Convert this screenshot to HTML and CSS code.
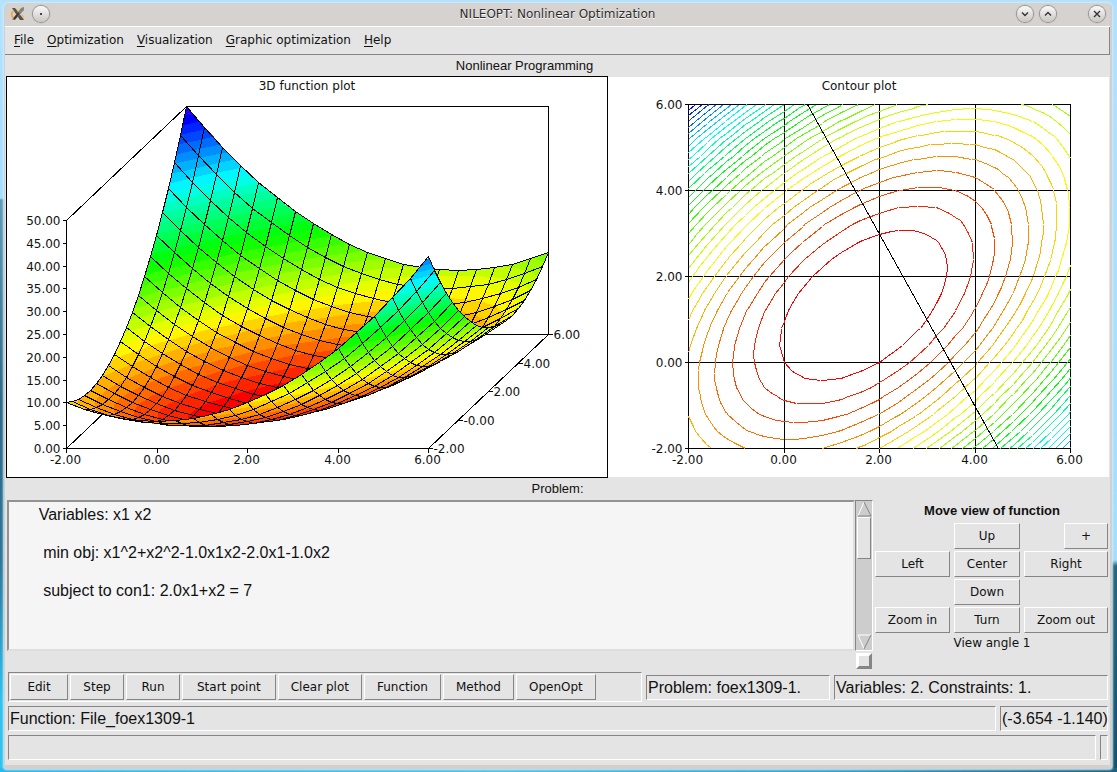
FILE: index.html
```
<!DOCTYPE html>
<html lang="en">
  <head>
    <meta charset="UTF-8" />
    <meta name="viewport" content="width=device-width, initial-scale=1.0" />
    <title>NILEOPT: Nonlinear Optimization</title>
    <link rel="stylesheet" href="styles.css">
  </head>
  <body>
    <div class="window">
      <header class="titlebar">
        <div class="titlebar-side">
          <svg class="app-icon" viewBox="0 0 16 16" width="16" height="16">
            <path d="M3 5 Q0 9 4 13" fill="none" stroke="#f7a84a" stroke-width="2" />
            <path d="M12 9 L13 13" stroke="#f7b35a" stroke-width="2" />
            <path d="M6 3 L8 6" stroke="#f4c23c" stroke-width="2" />
            <path d="M2 2 L5 2 L14 14 L10 14 Z" fill="#55524d" />
            <path d="M11 2 L14 1 L14 4 L5 14 L2 14 Z" fill="#86847e" />
            <path d="M9 7 L4 13" stroke="#3b3935" stroke-width="2" />
          </svg>
          <button class="wm-button" aria-label="Sticky">
            <svg viewBox="0 0 16 16" width="16" height="16"><rect x="7" y="7" width="2" height="2" fill="#444" /></svg>
          </button>
        </div>
        <span class="title">NILEOPT: Nonlinear Optimization</span>
        <div class="titlebar-side right">
          <button class="wm-button" aria-label="Minimize">
            <svg viewBox="0 0 16 16" width="16" height="16"><path d="M5 6.5 L8 9.5 L11 6.5" /></svg>
          </button>
          <button class="wm-button" aria-label="Maximize">
            <svg viewBox="0 0 16 16" width="16" height="16"><path d="M5 9.5 L8 6.5 L11 9.5" /></svg>
          </button>
          <button class="wm-button close" aria-label="Close">
            <svg viewBox="0 0 16 16" width="16" height="16"><path d="M5 5 L11 11 M11 5 L5 11" /></svg>
          </button>
        </div>
      </header>

      <nav class="menubar">
        <a href="#"><u>F</u>ile</a>
        <a href="#"><u>O</u>ptimization</a>
        <a href="#"><u>V</u>isualization</a>
        <a href="#"><u>G</u>raphic optimization</a>
        <a href="#"><u>H</u>elp</a>
      </nav>

      <main>
        <h1 class="caption">Nonlinear Programming</h1>
        <div class="plots">
          <svg class="plot surface" id="surface" viewBox="0 0 600 400"></svg>
          <svg class="plot" id="contour" viewBox="0 0 501 400"></svg>
        </div>

        <label class="caption problem-caption" for="problem">Problem:</label>
        <div class="middle">
          <textarea class="problem" id="problem" spellcheck="false">      Variables: x1 x2

       min obj: x1^2+x2^2-1.0x1x2-2.0x1-1.0x2

       subject to con1: 2.0x1+x2 = 7</textarea>
          <div class="scroll">
            <div class="scrollbar">
              <svg viewBox="0 0 15 16" width="15" height="16">
                <path d="M7 1 L1 15" stroke="#fff" />
                <path d="M7 1 L14 15 L1 15" stroke="#858585" />
              </svg>
              <div class="thumb"></div>
              <div class="trough"></div>
              <svg viewBox="0 0 15 16" width="15" height="16">
                <path d="M14 1 L1 1 L7 15" stroke="#fff" />
                <path d="M14 1 L7 15" stroke="#858585" />
              </svg>
            </div>
            <div class="sash"></div>
          </div>
          <section class="view">
            <h2>Move view of function</h2>
            <div class="view-buttons">
              <button class="up">Up</button>
              <button class="plus">+</button>
              <button class="left">Left</button>
              <button>Center</button>
              <button>Right</button>
              <button class="down">Down</button>
              <button class="left">Zoom in</button>
              <button>Turn</button>
              <button>Zoom out</button>
            </div>
            <p>View angle 1</p>
          </section>
        </div>

        <div class="row tools">
          <div class="toolbar">
            <button class="roomy">Edit</button>
            <button>Step</button>
            <button>Run</button>
            <button class="roomy">Start point</button>
            <button>Clear plot</button>
            <button>Function</button>
            <button>Method</button>
            <button>OpenOpt</button>
          </div>
          <div class="status name">Problem: foex1309-1.</div>
          <div class="status size">Variables: 2. Constraints: 1.</div>
        </div>
        <div class="row">
          <div class="status wide">Function: File_foex1309-1</div>
          <div class="status coords">(-3.654 -1.140)</div>
        </div>
        <div class="row">
          <div class="status wide"></div>
          <div class="status end"></div>
        </div>
      </main>
    </div>
    <script src="plots.js"></script>
  </body>
</html>
```
FILE: styles.css
```
/* Desktop behind the window */
body {
  margin: 0;
  padding: 3px 5px 6px 4px;
  font-family: "DejaVu Sans", sans-serif;
  font-size: 12px;
  color: #111;
  background:
    linear-gradient(90deg, #2cb8ea, #4fc0ec 45%, #2f9fd0 75%, #1d5f80) bottom / 100% 7px no-repeat,
    linear-gradient(#b4dffc, #a5dcff 560px, #2b6480 566px, #17506c) right / 8px 100% no-repeat,
    linear-gradient(#b4e2ff, #a5dcff 198px, #5f9ab5 200px, #2f6683 400px, #2f7396 560px, #2fc0ee 700px) left / 8px 100% no-repeat,
    #b4dffc;
}
.window {
  border: 1px solid #d3cfcc;
  border-width: 0 2px 4px 1px;
  border-radius: 5px 5px 3px 3px;
  background: #e4e4e4;
  box-shadow: 0 0 2px 1px #c9efff;
}

button {
  font: inherit;
  color: inherit;
  margin: 0;
  padding: 0 12px;
  height: 26px;
  background: #e4e4e4;
  border: 1px solid;
  border-color: #fff #858585 #858585 #fff;
}

/* Title bar */
.titlebar {
  display: flex;
  align-items: center;
  box-sizing: border-box;
  height: 24px;
  padding: 0 5px 2px;
  background: #d6d2cf;
  border-bottom: 1px solid #fff;
  border-radius: 4px 4px 0 0;
}
.titlebar-side {
  display: flex;
  flex: 1;
  align-items: center;
  gap: 7px;
}
.titlebar-side.right {
  justify-content: flex-end;
}
.title {
  color: #2c2c2c;
  text-shadow: 0 1px #fff;
}
.wm-button {
  display: flex;
  width: 16px;
  height: 16px;
  padding: 0;
  border: none;
  border-radius: 50%;
  background: linear-gradient(#fafafa, #c9c6c3);
  box-shadow: 0 0 1px 1px #8f8c89;
}
.wm-button.close {
  margin-left: 26px;
}
.wm-button path {
  fill: none;
  stroke: #333;
  stroke-width: 1.4;
}

/* Menu */
.menubar {
  display: flex;
  gap: 13px;
  height: 27px;
  line-height: 26px;
  padding-left: 9px;
  border-right: 1px solid #858585;
  border-bottom: 1px solid #858585;
}
.menubar a {
  color: inherit;
  text-decoration: none;
}
.menubar u {
  text-underline-offset: 2px;
}

main {
  padding: 0 1px 5px;
}
.caption {
  display: block;
  margin: 0;
  padding-right: 66px;
  font: 13px/21px "Liberation Sans", sans-serif;
  text-align: center;
}
.problem-caption {
  padding-right: 0;
  line-height: 22px;
}

/* Plots */
.plots {
  display: grid;
  grid-template-columns: minmax(0, 602fr) minmax(0, 501fr);
}
.plot {
  display: block;
  width: 100%;
  box-sizing: border-box;
  background: #fff;
  shape-rendering: crispEdges;
  align-self: center;
}
.plot.surface {
  border: 1px solid #000;
}
.plot text {
  font-size: 12px;
  fill: #111;
}
.plot .middle-label {
  text-anchor: middle;
}
.plot .end-label {
  text-anchor: end;
}
.axis {
  fill: none;
  stroke: #000;
}

/* Problem text and view controls */
.middle {
  display: flex;
  align-items: flex-start;
  padding-left: 1px;
}
.problem {
  flex: 1;
  height: 151px;
  box-sizing: border-box;
  margin: 0;
  padding: 3px;
  font: 16px/19px "Liberation Sans", sans-serif;
  color: #111;
  background: #f5f5f5;
  border: 2px solid;
  border-color: #929292 #dedede #dedede #929292;
  border-radius: 0;
  resize: none;
  overflow: hidden;
}
.scroll {
  width: 18px;
  margin-right: 2px;
}
.scrollbar {
  display: flex;
  flex-direction: column;
  height: 151px;
  box-sizing: border-box;
  padding: 0 1px;
  background: #cdcdcd;
  border: 1px solid;
  border-color: #858585 #fff #fff #858585;
}
.scrollbar path {
  fill: none;
}
.thumb {
  height: 42px;
  box-sizing: border-box;
  background: #e4e4e4;
  border: 1px solid;
  border-color: #fff #858585 #858585 #fff;
}
.trough {
  flex: 1;
}
.sash {
  width: 16px;
  height: 16px;
  margin: 2px 1px 0;
  box-sizing: border-box;
  background: #e4e4e4;
  border: 3px solid;
  border-color: #fff #858585 #858585 #fff;
}
.view {
  width: 234px;
  text-align: center;
}
.view h2 {
  margin: 0 0 2px;
  font: bold 13px/21px "Liberation Sans", sans-serif;
}
.view-buttons {
  display: grid;
  grid-template-columns: 75px 66px 84px;
  gap: 2px 4px;
}
.view-buttons button {
  padding: 0;
}
.view-buttons .up,
.view-buttons .down {
  grid-column: 2;
}
.view-buttons .left {
  grid-column: 1;
}
.view-buttons .plus {
  width: 44px;
  justify-self: end;
}
.view p {
  margin: 0;
  line-height: 20px;
}

/* Tools and status */
.row {
  display: flex;
  gap: 4px;
  margin: 4px 1px 0 2px;
}
.tools {
  align-items: center;
  margin-top: 3px;
}
.toolbar {
  display: flex;
  flex: 1;
  gap: 2px;
  padding: 1px;
  border: 1px solid;
  border-color: #858585 #fff #fff #858585;
}
.toolbar button {
  min-width: 54px;
}
.toolbar .roomy {
  min-width: 58px;
  padding: 0 14px;
}
.status {
  box-sizing: border-box;
  height: 25px;
  padding: 0 1px;
  font: 16px/23px "Liberation Sans", sans-serif;
  white-space: nowrap;
  border: 1px solid;
  border-color: #858585 #fff #fff #858585;
}
.status.name {
  width: 184px;
}
.status.size {
  width: 274px;
}
.status.wide {
  flex: 1;
}
.status.coords {
  width: 108px;
}
.status.end {
  width: 8px;
}
```
FILE: plots.js
```
const MIN = -2;
const MAX = 6;
const CELLS = 20;
const LEVELS = 30;
const TOP = 50;
const STEP = TOP / LEVELS;

const f = (x, y) => x * x + y * y - x * y - 2 * x - y;
const grid = (i) => MIN + ((MAX - MIN) * i) / CELLS;
const hue = (i) => (Math.max(0, Math.min(LEVELS, i)) * 248) / LEVELS;
const color = (i) => `hsl(${hue(i)}, 100%, 50%)`;

function add(svg, name, attrs, text) {
  const el = document.createElementNS("http://www.w3.org/2000/svg", name);
  for (const key in attrs) el.setAttribute(key, attrs[key]);
  if (text) el.textContent = text;
  svg.appendChild(el);
}

const toPath = (pts) => "M" + pts.map((p) => p.join(" ")).join("L");

// keep the part of a polygon of [x, y, z] points on one side of a level
function clip(poly, level, sign) {
  const out = [];
  poly.forEach((a, i) => {
    const b = poly[(i + 1) % poly.length];
    const da = (a[2] - level) * sign;
    const db = (b[2] - level) * sign;
    if (da >= 0) out.push(a);
    if (da * db < 0) {
      const t = da / (da - db);
      out.push(a.map((v, k) => v + (b[k] - v) * t));
    }
  });
  return out;
}

function drawSurface(svg) {
  const at = (x, y, z) => [
    Math.round(59 + (x + 2) * 45.25 + (y + 2) * 15) + 0.5,
    Math.round(371 - (y + 2) * 14.25 - z * 4.56) + 0.5,
  ];
  const axis = (pts) => add(svg, "path", { class: "axis", d: toPath(pts) });

  add(svg, "text", { x: 300, y: 13, class: "middle-label" }, "3D function plot");
  axis([at(-2, -2, 50), at(-2, 6, 50), at(6, 6, 50), at(6, 6, 0), at(6, -2, 0)]);
  axis([at(6, 6, 0), at(-2, 6, 0), at(-2, -2, 0)]);
  axis([at(-2, -2, 50), at(-2, -2, 0), at(6, -2, 0)]);

  for (let z = 0; z <= TOP; z += 5) {
    const [x, y] = at(-2, -2, z);
    axis([[x - 4, y], [x, y]]);
    add(svg, "text", { x: x - 6, y: y + 4, class: "end-label" }, z.toFixed(2));
  }
  for (let v = MIN; v <= MAX; v += 2) {
    const [x, y] = at(v, -2, 0);
    axis([[x, y], [x, y + 4]]);
    add(svg, "text", { x: x - 1, y: y + 15, class: "middle-label" }, v.toFixed(2));
    const [dx, dy] = at(6, v, 0);
    axis([[dx, dy], [dx + 4, dy]]);
    add(svg, "text", { x: dx + 5, y: dy + 4 }, v ? v.toFixed(2) : "-0.00");
  }

  // far cells first
  for (let j = CELLS - 1; j >= 0; j--) {
    for (let i = 0; i < CELLS; i++) {
      const quad = [[i, j], [i + 1, j], [i + 1, j + 1], [i, j + 1]].map(([a, b]) => {
        const x = grid(a);
        const y = grid(b);
        return [x, y, f(x, y)];
      });
      for (const tri of [[quad[0], quad[1], quad[2]], [quad[0], quad[2], quad[3]]]) {
        const zs = tri.map((p) => p[2]);
        const from = Math.floor(Math.min(...zs) / STEP);
        const to = Math.floor(Math.max(...zs) / STEP);
        for (let k = from; k <= to; k++) {
          const part = clip(clip(tri, k * STEP, 1), (k + 1) * STEP, -1);
          if (part.length < 3) continue;
          add(svg, "path", { d: toPath(part.map((p) => at(...p))) + "Z", fill: color(k + 1) });
        }
      }
      axis([...quad, quad[0]].map((p) => at(...p)));
    }
  }
}

function drawContour(svg) {
  const at = (x, y) => [
    Math.round(80 + (x + 2) * 47.75) + 0.5,
    Math.round(371 - (y + 2) * 43) + 0.5,
  ];
  const axis = (pts) => add(svg, "path", { class: "axis", d: toPath(pts) });

  add(svg, "text", { x: 251, y: 13, class: "middle-label" }, "Contour plot");
  for (let v = MIN; v <= MAX; v += 2) {
    const [x, y] = at(v, MIN);
    axis([at(v, MAX), [x, y + 4]]);
    add(svg, "text", { x: x - 1, y: y + 15, class: "middle-label" }, v.toFixed(2));
    const [lx, ly] = at(MIN, v);
    axis([[lx - 4, ly], at(MAX, v)]);
    add(svg, "text", { x: lx - 6, y: ly + 4, class: "end-label" }, v.toFixed(2));
  }

  for (let k = 0; k < LEVELS; k++) {
    const level = k * STEP;
    let d = "";
    for (let i = 0; i < CELLS; i++) {
      for (let j = 0; j < CELLS; j++) {
        const corner = (a, b) => [grid(a), grid(b), f(grid(a), grid(b))];
        const p = [corner(i, j), corner(i + 1, j), corner(i + 1, j + 1), corner(i, j + 1)];
        for (const tri of [[p[0], p[1], p[2]], [p[0], p[2], p[3]]]) {
          const hits = [];
          tri.forEach((a, n) => {
            const b = tri[(n + 1) % 3];
            if (a[2] < level === b[2] < level) return;
            const t = (level - a[2]) / (b[2] - a[2]);
            hits.push(at(a[0] + (b[0] - a[0]) * t, a[1] + (b[1] - a[1]) * t));
          });
          if (hits.length === 2) d += toPath(hits);
        }
      }
    }
    add(svg, "path", { d, fill: "none", stroke: color(k) });
  }

  // constraint 2x + y = 7
  axis([at(0.5, 6), at(4.5, -2)]);
}

drawSurface(document.getElementById("surface"));
drawContour(document.getElementById("contour"));
```
